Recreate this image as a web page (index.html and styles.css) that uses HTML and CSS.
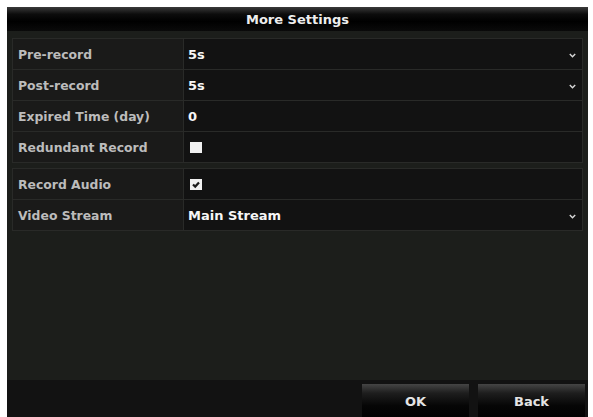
FILE: index.html
```html
<!DOCTYPE html>
<html>
<head>
<meta charset="utf-8">
<link rel="stylesheet" href="styles.css">
</head>
<body>
<div class="dialog">
  <div class="titlebar">More Settings</div>
  <div class="content">
    <div class="group">
      <div class="row">
        <div class="label">Pre-record</div>
        <div class="value select"><span>5s</span><svg class="chev" width="7" height="5" viewBox="0 0 7 5"><polyline points="0.8,1 3.5,3.8 6.2,1" fill="none" stroke="#d8d8d8" stroke-width="1.4"/></svg></div>
      </div>
      <div class="row">
        <div class="label">Post-record</div>
        <div class="value select"><span>5s</span><svg class="chev" width="7" height="5" viewBox="0 0 7 5"><polyline points="0.8,1 3.5,3.8 6.2,1" fill="none" stroke="#d8d8d8" stroke-width="1.4"/></svg></div>
      </div>
      <div class="row">
        <div class="label">Expired Time (day)</div>
        <div class="value"><span>0</span></div>
      </div>
      <div class="row">
        <div class="label">Redundant Record</div>
        <div class="value"><span class="checkbox"></span></div>
      </div>
    </div>
    <div class="group">
      <div class="row">
        <div class="label">Record Audio</div>
        <div class="value"><span class="checkbox"><svg width="12" height="11" viewBox="0 0 12 11"><polyline points="3,5.5 5.2,7.6 9,3.4" fill="none" stroke="#1a1a1a" stroke-width="2.2"/></svg></span></div>
      </div>
      <div class="row">
        <div class="label">Video Stream</div>
        <div class="value select"><span>Main Stream</span><svg class="chev" width="7" height="5" viewBox="0 0 7 5"><polyline points="0.8,1 3.5,3.8 6.2,1" fill="none" stroke="#d8d8d8" stroke-width="1.4"/></svg></div>
      </div>
    </div>
  </div>
  <div class="footer">
    <div class="btn">OK</div>
    <div class="btn">Back</div>
  </div>
</div>
</body>
</html>
```

FILE: styles.css
```css
html, body {
  margin: 0;
  padding: 0;
  background: #ffffff;
  overflow: hidden;
}

body {
  width: 593px;
  height: 417px;
  font-family: "DejaVu Sans", "Liberation Sans", sans-serif;
}

.dialog {
  margin: 7px 0 0 7px;
  width: 581px;
  height: 410px;
  display: flex;
  flex-direction: column;
  background: #1c1e1b;
}

.titlebar {
  height: 24px;
  flex: none;
  display: flex;
  align-items: center;
  justify-content: center;
  color: #eeeeee;
  font-weight: bold;
  font-size: 13px;
  background: linear-gradient(to bottom, #3a3a3a 0%, #0c0c0c 30%, #000000 60%, #0a0a0a 100%);
}

.content {
  flex: 1;
  padding: 7px 5px 0 5px;
  display: flex;
  flex-direction: column;
  gap: 5px;
}

.group {
  display: flex;
  flex-direction: column;
  gap: 1px;
  padding: 1px;
  background: #292a28;
}

.row {
  display: grid;
  grid-template-columns: 170px 1fr;
  gap: 1px;
  height: 30px;
}

.label {
  background: #1a1a19;
  color: #bcbcbc;
  font-weight: bold;
  font-size: 12.4px;
  display: flex;
  align-items: center;
  padding-left: 5px;
}

.value {
  background: #121212;
  color: #f6f6f6;
  font-weight: bold;
  font-size: 13px;
  display: flex;
  align-items: center;
  padding-left: 4px;
  padding-right: 6px;
}

.select {
  justify-content: space-between;
}

.chev {
  display: block;
  margin-top: 2px;
}

.checkbox {
  width: 12px;
  height: 11px;
  margin-left: 2px;
  background: #f0f0f0;
  display: block;
}

.checkbox svg {
  display: block;
}

.footer {
  height: 37px;
  flex: none;
  background: #121212;
  display: flex;
  justify-content: flex-end;
  align-items: flex-start;
  gap: 9px;
  padding: 4px 3px 0 0;
  box-sizing: border-box;
}

.btn {
  width: 107px;
  height: 36px;
  background: linear-gradient(to bottom, #454545 0%, #1e1e1e 25%, #060606 60%, #000000 100%);
  color: #e4e4e4;
  font-weight: bold;
  font-size: 13px;
  display: flex;
  align-items: center;
  justify-content: center;
  padding-bottom: 2px;
  box-sizing: border-box;
}
```
